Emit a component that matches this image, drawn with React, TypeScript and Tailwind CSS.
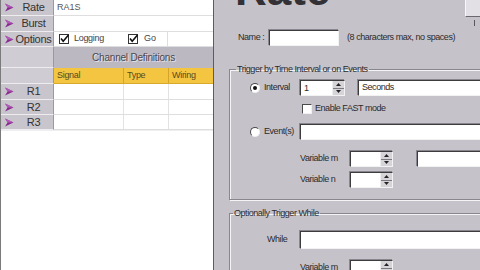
import React from "react";

const font = "font-['Liberation_Sans',Arial,sans-serif]";

function Arrow() {
  return (
    <svg width="9" height="9" viewBox="0 0 9 9" className="shrink-0">
      <path d="M0 0.5 L8.5 4.5 L0 8.5 L2.6 4.5 Z" fill="#862b8e" />
      <path d="M0 0.5 L8.5 4.5 L2.6 4.5 Z" fill="#b35cba" />
    </svg>
  );
}

function RowHead({ label, arrow = true, light = false }: { label?: string; arrow?: boolean; light?: boolean }) {
  return (
    <div
      className={`w-[53px] shrink-0 flex items-center pl-[4px] border-r border-r-[#9c98a0] border-b border-b-[#eeecef] ${
        light ? "bg-[#d0ccd3]" : "bg-[#c9c5cc]"
      }`}
    >
      {arrow && <Arrow />}
      <span className="flex-1 text-center text-[11px] tracking-[-0.3px] text-[#333]">{label}</span>
    </div>
  );
}

function Tick() {
  return (
    <svg width="11" height="10" viewBox="0 0 11 10" className="shrink-0">
      <rect x="0.5" y="0.5" width="9" height="9" fill="white" stroke="#333" />
      <path d="M2 4.5 L4.2 7.2 L9.5 1" fill="none" stroke="#111" strokeWidth="1.6" />
    </svg>
  );
}

function Field({ className = "", children }: { className?: string; children?: React.ReactNode }) {
  return (
    <div
      className={`h-[16px] flex items-center pl-[3px] bg-white border border-t-[#3c3c3c] border-l-[#3c3c3c] border-r-[#f2f2f2] border-b-[#f2f2f2] shadow-[-1px_-1px_0_#8a8690] ${className}`}
    >
      {children}
    </div>
  );
}

function Spin({ className = "", value = "" }: { className?: string; value?: string }) {
  return (
    <div
      className={`h-[16px] flex bg-white border border-t-[#3c3c3c] border-l-[#3c3c3c] border-r-[#f2f2f2] border-b-[#f2f2f2] shadow-[-1px_-1px_0_#8a8690] ${className}`}
    >
      <span className="flex-1 pl-[3px] leading-[14px]">{value}</span>
      <div className="w-[12px] flex flex-col border-l border-l-[#eeeeee]">
        <div className="flex-1 bg-[#d6d3d9] flex items-center justify-center border-b border-b-[#7c7880]">
          <svg width="5" height="3" viewBox="0 0 5 3">
            <path d="M0 3 L2.5 0 L5 3Z" fill="#222" />
          </svg>
        </div>
        <div className="flex-1 bg-[#d6d3d9] flex items-center justify-center">
          <svg width="5" height="3" viewBox="0 0 5 3">
            <path d="M0 0 L2.5 3 L5 0Z" fill="#222" />
          </svg>
        </div>
      </div>
    </div>
  );
}

function Radio({ on = false }: { on?: boolean }) {
  return (
    <span className="w-[10px] h-[10px] shrink-0 rounded-full bg-white border border-t-[#4a4a4a] border-l-[#4a4a4a] border-r-[#f0f0f0] border-b-[#f0f0f0] flex items-center justify-center">
      {on && <span className="w-[4px] h-[4px] rounded-full bg-[#111]" />}
    </span>
  );
}

function LeftGrid() {
  return (
    <div className="w-[214px] shrink-0 h-full flex flex-col bg-white border-l border-l-[#7a7a7a] border-r border-r-[#5e5a62]">
      <div className="flex h-[16px]">
        <RowHead label="Rate" />
        <div className="flex-1 flex items-center pl-[3px] border-b border-b-[#dedede] text-[9px] text-[#555]">RA1S</div>
      </div>
      <div className="flex h-[16px]">
        <RowHead label="Burst" />
        <div className="flex-1 border-b border-b-[#dedede]" />
      </div>
      <div className="flex h-[15px]">
        <RowHead label="Options" />
        <div className="w-[72px] flex items-center gap-[4px] pl-[5px] border-b border-b-[#dedede] text-[9px] tracking-[-0.3px] text-[#444]">
          <Tick />
          <span>Logging</span>
        </div>
        <div className="w-[42px] flex items-center gap-[5px] pl-[2px] border-r border-r-[#dedede] border-b border-b-[#dedede] text-[9px] text-[#444]">
          <Tick />
          <span>Go</span>
        </div>
        <div className="flex-1 border-b border-b-[#dedede]" />
      </div>
      <div className="flex h-[21px]">
        <RowHead arrow={false} light />
        <div className="flex-1 flex items-center justify-center bg-[#bcb8c1] text-[10px] tracking-[-0.2px] text-[#4a474f] [text-shadow:1px_1px_0_#e4e2e6]">
          Channel Definitions
        </div>
      </div>
      <div className="flex h-[16px]">
        <RowHead arrow={false} light />
        <div className="flex-1 flex bg-[#f3c540] border-b border-b-[#d9aa2a] text-[9px] tracking-[-0.3px] text-[#5a4a20]">
          <div className="w-[70px] pl-[3px] flex items-center border-r border-r-[#d4a52a]">Signal</div>
          <div className="w-[45px] pl-[3px] flex items-center border-r border-r-[#d4a52a]">Type</div>
          <div className="flex-1 pl-[3px] flex items-center">Wiring</div>
        </div>
      </div>
      {["R1", "R2", "R3"].map((r, i) => (
        <div key={r} className={`flex ${i === 0 ? "h-[16px]" : "h-[15px]"}`}>
          <RowHead label={r} />
          <div className="flex-1 flex border-b border-b-[#dedede]">
            <div className="w-[70px] border-r border-r-[#e2e2e2]" />
            <div className="w-[45px] border-r border-r-[#e2e2e2]" />
            <div className="flex-1" />
          </div>
        </div>
      ))}
      <div className="flex-1 border-t border-t-[#eeeeee]" />
    </div>
  );
}

function RightPanel() {
  return (
    <div className="flex-1 min-w-0 overflow-hidden bg-[#c6c2ca] flex flex-col text-[9px] tracking-[-0.45px] text-[#2b2b2b]">
      <div className="flex h-[17px] shrink-0 items-start">
        {/* page title, scrolled mostly out of view */}
        <div className="h-[5px] overflow-hidden pl-[21px]">
          <div className="-mt-[32px] text-[44px] leading-[44px] font-bold tracking-normal text-[#333135]">Rate</div>
        </div>
        <div className="ml-auto flex flex-col items-end">
          <div className="w-[15px] h-[17px] bg-[#e2e0e4] border-l border-l-[#f8f8f8] border-b border-b-[#6c6870]" />
          <div className="w-[1px] h-[6px] mt-[3px] mr-[5px] bg-[#5a565e]" />
        </div>
      </div>

      <div className="mt-[13px] h-[16px] shrink-0 flex items-center pl-[24px]">
        <span className="w-[31px]">Name :</span>
        <Field className="w-[70px]" />
        <span className="ml-[8px]">(8 characters max, no spaces)</span>
      </div>

      <fieldset className="mt-[18px] ml-[15px] w-[280px] shrink-0 border border-[#8a8690] shadow-[inset_1px_1px_0_#f4f4f4,1px_1px_0_#f4f4f4]">
        <legend className="ml-[6px] px-[1px] leading-[11px]">Trigger by Time Interval or on Events</legend>
        <div className="pl-[20px] pt-[5px] pb-[11px] flex flex-col">
          <div className="h-[16px] flex items-center">
            <div className="w-[50px] flex items-center gap-[4px]">
              <Radio on />
              <span>Interval</span>
            </div>
            <Spin className="w-[45px]" value="1" />
            <Field className="ml-[13px] flex-1">Seconds</Field>
          </div>
          <div className="mt-[7px] h-[11px] pl-[52px] flex items-center gap-[3px]">
            <span className="w-[10px] h-[10px] bg-white border border-t-[#4a4a4a] border-l-[#4a4a4a] border-r-[#f0f0f0] border-b-[#f0f0f0]" />
            <span>Enable FAST mode</span>
          </div>
          <div className="mt-[10px] h-[16px] flex items-center">
            <div className="w-[50px] flex items-center gap-[4px]">
              <Radio />
              <span>Event(s)</span>
            </div>
            <Field className="flex-1" />
          </div>
          <div className="mt-[11px] h-[16px] flex items-center pl-[50px]">
            <span className="w-[50px]">Variable m</span>
            <Spin className="w-[43px]" />
            <Field className="ml-[24px] flex-1" />
          </div>
          <div className="mt-[5px] h-[16px] flex items-center pl-[50px]">
            <span className="w-[50px]">Variable n</span>
            <Spin className="w-[43px]" />
          </div>
        </div>
      </fieldset>

      <fieldset className="mt-[8px] ml-[15px] w-[280px] shrink-0 border border-[#8a8690] shadow-[inset_1px_1px_0_#f4f4f4,1px_1px_0_#f4f4f4]">
        <legend className="ml-[3px] px-[1px] leading-[11px]">Optionally Trigger While</legend>
        <div className="pt-[12px] pb-[20px] flex flex-col">
          <div className="h-[18px] flex items-center pl-[37px]">
            <span className="w-[33px]">While</span>
            <Field className="flex-1 h-[18px]" />
          </div>
          <div className="mt-[11px] h-[16px] flex items-center pl-[70px]">
            <span className="w-[50px]">Variable m</span>
            <Spin className="w-[43px]" />
          </div>
        </div>
      </fieldset>
    </div>
  );
}

export default function App() {
  return (
    <div className={`w-[480px] h-[270px] overflow-hidden flex ${font}`}>
      <LeftGrid />
      <RightPanel />
    </div>
  );
}
